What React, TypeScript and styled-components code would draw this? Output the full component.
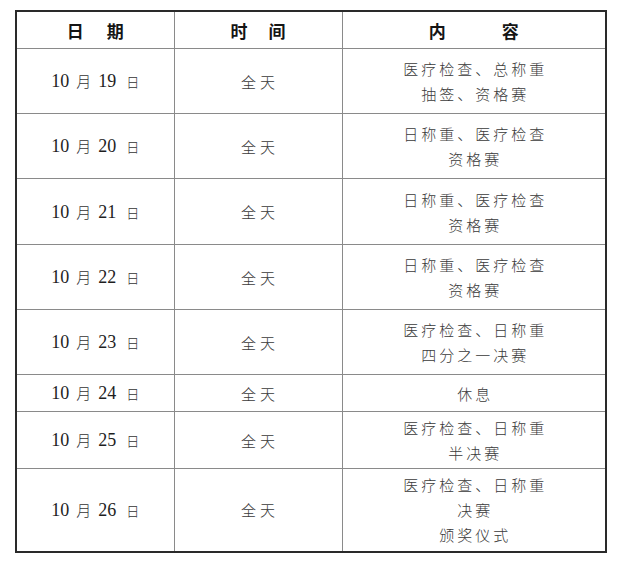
import React from "react";
import styled, { createGlobalStyle } from "styled-components";

const GlobalStyle = createGlobalStyle`
  html, body {
    margin: 0;
    padding: 0;
    background: #ffffff;
  }
  body {
    font-family: "Liberation Serif", "Noto Sans CJK SC", serif;
  }
`;

const Page = styled.div`
  width: 618px;
  height: 561px;
  padding: 10px 0 0 15px;
  box-sizing: border-box;
`;

const Table = styled.table`
  width: 590px;
  border-collapse: collapse;
  table-layout: fixed;
  border: 2px solid #2a2a2a;
`;

const Col = styled.col<{ $w: number }>`
  width: ${({ $w }) => $w}px;
`;

const HeadCell = styled.th`
  height: 36px;
  padding: 0;
  border: 1px solid #8a8a8a;
  font-family: "Noto Sans CJK SC", sans-serif;
  font-weight: 700;
  font-size: 17px;
  color: #151515;
`;

const HeadLabel = styled.div<{ $gap: number }>`
  display: flex;
  justify-content: center;
  gap: ${({ $gap }) => $gap}px;
`;

const Row = styled.tr<{ $h: number }>`
  height: ${({ $h }) => $h}px;
`;

const Cell = styled.td`
  padding: 0;
  border: 1px solid #8a8a8a;
  text-align: center;
  vertical-align: middle;
  color: #333;
`;

const DateText = styled.div`
  display: flex;
  justify-content: center;
  align-items: baseline;
  gap: 7px;
  font-family: "Liberation Serif", serif;
  font-size: 18px;
  color: #1e1e1e;
`;

const DateUnit = styled.span<{ $small?: boolean }>`
  font-family: "Noto Sans CJK SC", sans-serif;
  font-weight: 300;
  font-size: ${({ $small }) => ($small ? 13 : 15)}px;
  color: #333;
  margin-left: ${({ $small }) => ($small ? 3 : 0)}px;
`;

const TimeText = styled.span`
  font-family: "Noto Sans CJK SC", sans-serif;
  font-weight: 300;
  font-size: 15px;
  letter-spacing: 4px;
  padding-left: 4px;
  color: #3a3a3a;
`;

const Content = styled.div`
  font-family: "Noto Sans CJK SC", sans-serif;
  font-weight: 300;
  font-size: 15px;
  line-height: 25px;
  letter-spacing: 3px;
  padding-left: 3px;
  color: #3a3a3a;
`;

type Item = { day: number; h: number; lines: string[] };

const items: Item[] = [
  { day: 19, h: 65, lines: ["医疗检查、总称重", "抽签、资格赛"] },
  { day: 20, h: 65, lines: ["日称重、医疗检查", "资格赛"] },
  { day: 21, h: 66, lines: ["日称重、医疗检查", "资格赛"] },
  { day: 22, h: 65, lines: ["日称重、医疗检查", "资格赛"] },
  { day: 23, h: 65, lines: ["医疗检查、日称重", "四分之一决赛"] },
  { day: 24, h: 37, lines: ["休息"] },
  { day: 25, h: 57, lines: ["医疗检查、日称重", "半决赛"] },
  { day: 26, h: 83, lines: ["医疗检查、日称重", "决赛", "颁奖仪式"] },
];

const App: React.FC = () => {
  return (
    <Page>
      <GlobalStyle />
      <Table>
        <colgroup>
          <Col $w={158} />
          <Col $w={168} />
          <Col $w={264} />
        </colgroup>
        <thead>
          <tr>
            <HeadCell>
              <HeadLabel $gap={23}>
                <span>日</span>
                <span>期</span>
              </HeadLabel>
            </HeadCell>
            <HeadCell>
              <HeadLabel $gap={21}>
                <span>时</span>
                <span>间</span>
              </HeadLabel>
            </HeadCell>
            <HeadCell>
              <HeadLabel $gap={56}>
                <span>内</span>
                <span>容</span>
              </HeadLabel>
            </HeadCell>
          </tr>
        </thead>
        <tbody>
          {items.map((it) => (
            <Row key={it.day} $h={it.h}>
              <Cell>
                <DateText>
                  <span>10</span>
                  <DateUnit>月</DateUnit>
                  <span>{it.day}</span>
                  <DateUnit $small>日</DateUnit>
                </DateText>
              </Cell>
              <Cell>
                <TimeText>全天</TimeText>
              </Cell>
              <Cell>
                {it.lines.map((l) => (
                  <Content key={l}>{l}</Content>
                ))}
              </Cell>
            </Row>
          ))}
        </tbody>
      </Table>
    </Page>
  );
};

export default App;
